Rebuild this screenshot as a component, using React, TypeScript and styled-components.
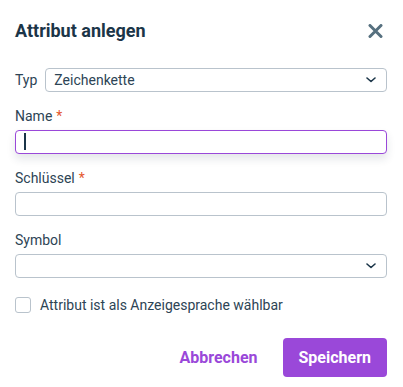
import React from "react";
import styled, { createGlobalStyle } from "styled-components";

const Global = createGlobalStyle`
  html, body { margin: 0; padding: 0; background: #ffffff; }
  body { font-family: Roboto, "Liberation Sans", Arial, sans-serif; }
  * { box-sizing: border-box; }
`;

const purple = "#9a48d9";
const navy = "#1b3548";
const labelColor = "#2d4455";
const border = "#b9c3cc";

const Dialog = styled.div`
  width: 403px;
  height: 387px;
  padding: 19px 16px 0 15px;
  display: flex;
  flex-direction: column;
`;

const Header = styled.div`
  display: flex;
  align-items: center;
  justify-content: space-between;
  height: 24px;
  margin-bottom: 25px;
`;

const Title = styled.h2`
  margin: 0;
  font-size: 18px;
  line-height: 24px;
  font-weight: 700;
  color: ${navy};
`;

const CloseButton = styled.button`
  border: 0;
  background: none;
  padding: 0;
  width: 16px;
  height: 16px;
  margin-right: 4px;
  display: flex;
  align-items: center;
  justify-content: center;
  cursor: pointer;
`;

const InlineRow = styled.div`
  display: flex;
  align-items: center;
  gap: 8px;
  margin-bottom: 14px;
`;

const Field = styled.div`
  display: flex;
  flex-direction: column;
  gap: 4px;
  margin-bottom: 14px;
`;

const Label = styled.label`
  font-size: 14px;
  line-height: 20px;
  color: ${labelColor};
`;

const Required = styled.span`
  color: #e4572e;
  margin-left: 4px;
`;

const InputWrap = styled.div`
  position: relative;
  flex: 1 1 auto;
`;

const TextInput = styled.input<{ $focused?: boolean }>`
  display: block;
  width: 100%;
  height: 24px;
  border: 1px solid ${(p) => (p.$focused ? purple : border)};
  border-radius: 4px;
  padding: 0 8px;
  font-family: inherit;
  font-size: 14px;
  color: ${navy};
  outline: none;
  background: #fff;
  box-shadow: ${(p) => (p.$focused ? "0 5px 8px rgba(30, 50, 70, 0.12)" : "none")};
`;

const Caret = styled.span`
  position: absolute;
  left: 9px;
  top: 3px;
  width: 1.5px;
  height: 17px;
  background: ${navy};
`;

const SelectBox = styled.div`
  flex: 1 1 auto;
  height: 24px;
  min-height: 24px;
  border: 1px solid ${border};
  border-radius: 4px;
  padding: 0 10px 0 8px;
  display: flex;
  align-items: center;
  justify-content: space-between;
  font-size: 14px;
  color: ${labelColor};
  background: #fff;
`;

const CheckRow = styled.label`
  display: flex;
  align-items: center;
  gap: 9px;
  margin-top: 3px;
  font-size: 14px;
  line-height: 20px;
  color: ${labelColor};
`;

const CheckBox = styled.span`
  width: 16px;
  height: 16px;
  border: 1px solid ${border};
  border-radius: 3px;
  background: #fff;
`;

const Footer = styled.div`
  display: flex;
  justify-content: flex-end;
  align-items: center;
  gap: 13px;
  margin-top: 23px;
`;

const Button = styled.button<{ $primary?: boolean }>`
  height: 39px;
  border: 0;
  border-radius: 4px;
  padding: 0 ${(p) => (p.$primary ? "16px" : "12px")};
  min-width: ${(p) => (p.$primary ? "104px" : "auto")};
  font-family: inherit;
  font-size: 16px;
  font-weight: 700;
  background: ${(p) => (p.$primary ? purple : "transparent")};
  color: ${(p) => (p.$primary ? "#fff" : purple)};
  cursor: pointer;
`;

const Chevron = () => (
  <svg width="10" height="6" viewBox="0 0 10 6" fill="none">
    <path d="M1 1l4 3.5L9 1" stroke={navy} strokeWidth="1.6" strokeLinecap="round" strokeLinejoin="round" />
  </svg>
);

export default function App() {
  return (
    <>
      <Global />
      <Dialog>
        <Header>
          <Title>Attribut anlegen</Title>
          <CloseButton aria-label="Schließen">
            <svg width="15" height="14" viewBox="0 0 15 14">
              <path d="M2 1.5l11 11M13 1.5l-11 11" stroke="#56707f" strokeWidth="3" strokeLinecap="round" />
            </svg>
          </CloseButton>
        </Header>

        <InlineRow>
          <Label>Typ</Label>
          <SelectBox>
            <span>Zeichenkette</span>
            <Chevron />
          </SelectBox>
        </InlineRow>

        <Field>
          <Label>
            Name<Required>*</Required>
          </Label>
          <InputWrap>
            <TextInput $focused />
            <Caret />
          </InputWrap>
        </Field>

        <Field>
          <Label>
            Schlüssel<Required>*</Required>
          </Label>
          <InputWrap>
            <TextInput />
          </InputWrap>
        </Field>

        <Field>
          <Label>Symbol</Label>
          <SelectBox>
            <span />
            <Chevron />
          </SelectBox>
        </Field>

        <CheckRow>
          <CheckBox />
          Attribut ist als Anzeigesprache wählbar
        </CheckRow>

        <Footer>
          <Button>Abbrechen</Button>
          <Button $primary>Speichern</Button>
        </Footer>
      </Dialog>
    </>
  );
}
